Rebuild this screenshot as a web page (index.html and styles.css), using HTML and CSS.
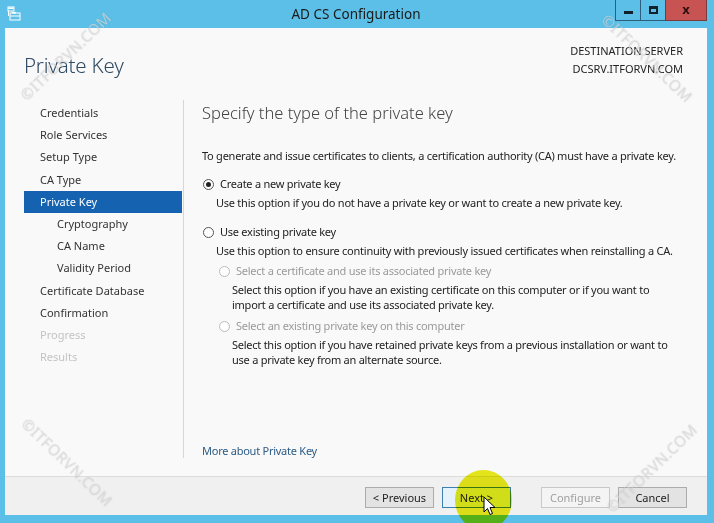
FILE: index.html
```html
<!DOCTYPE html>
<html>
<head>
<meta charset="utf-8">
<link rel="stylesheet" href="styles.css">
</head>
<body>
<div class="window">
  <div class="titlebar">
    <svg class="app-icon" width="14" height="16" viewBox="0 0 14 16">
      <rect x="1" y="1" width="6" height="4" fill="none" stroke="#ffffff" stroke-width="1"/>
      <rect x="1.5" y="1.5" width="5" height="1.5" fill="#ffffff"/>
      <rect x="3" y="7" width="10" height="7" fill="none" stroke="#ffffff" stroke-width="1"/>
      <rect x="5" y="6" width="4" height="1.5" fill="#ffffff"/>
      <line x1="3" y1="10" x2="13" y2="10" stroke="#ffffff" stroke-width="1"/>
      <line x1="1.5" y1="5" x2="1.5" y2="10" stroke="#ffffff" stroke-width="1"/>
    </svg>
    <div class="title">AD CS Configuration</div>
    <div class="controls">
      <div class="ctl ctl-min"><span class="min-glyph"></span></div>
      <div class="ctl ctl-max"><span class="max-glyph"></span></div>
      <div class="ctl ctl-close">x</div>
    </div>
  </div>
  <div class="client">
    <div class="header">
      <h1 class="page-title">Private Key</h1>
      <div class="dest">
        <div>DESTINATION SERVER</div>
        <div>DCSRV.ITFORVN.COM</div>
      </div>
    </div>
    <div class="main">
      <nav class="steps">
        <div class="step">Credentials</div>
        <div class="step">Role Services</div>
        <div class="step">Setup Type</div>
        <div class="step">CA Type</div>
        <div class="step active">Private Key</div>
        <div class="step sub">Cryptography</div>
        <div class="step sub">CA Name</div>
        <div class="step sub">Validity Period</div>
        <div class="step">Certificate Database</div>
        <div class="step">Confirmation</div>
        <div class="step disabled">Progress</div>
        <div class="step disabled">Results</div>
      </nav>
      <section class="content">
        <h2 class="heading">Specify the type of the private key</h2>
        <p class="intro">To generate and issue certificates to clients, a certification authority (CA) must have a private key.</p>
        <div class="option first">
          <div class="radio-row"><span class="radio checked"></span><span>Create a new private key</span></div>
          <div class="desc">Use this option if you do not have a private key or want to create a new private key.</div>
        </div>
        <div class="option second">
          <div class="radio-row"><span class="radio"></span><span>Use existing private key</span></div>
          <div class="desc">Use this option to ensure continuity with previously issued certificates when reinstalling a CA.</div>
          <div class="suboption">
            <div class="radio-row dim"><span class="radio off"></span><span>Select a certificate and use its associated private key</span></div>
            <div class="desc sub-desc">Select this option if you have an existing certificate on this computer or if you want to import a certificate and use its associated private key.</div>
          </div>
          <div class="suboption later">
            <div class="radio-row dim"><span class="radio off"></span><span>Select an existing private key on this computer</span></div>
            <div class="desc sub-desc">Select this option if you have retained private keys from a previous installation or want to use a private key from an alternate source.</div>
          </div>
        </div>
        <a class="more" href="#">More about Private Key</a>
      </section>
    </div>
    <div class="footer">
      <button class="btn">&lt; Previous</button>
      <button class="btn btn-focus">Next &gt;</button>
      <button class="btn btn-disabled gap">Configure</button>
      <button class="btn">Cancel</button>
    </div>
  </div>
  <div class="wm wm-tl">©ITFORVN.COM</div>
  <div class="wm wm-tr">©ITFORVN.COM</div>
  <div class="wm wm-bl">©ITFORVN.COM</div>
  <div class="wm wm-br">©ITFORVN.COM</div>
  <div class="highlight"></div>
  <svg class="cursor" width="13" height="20" viewBox="0 0 13 20">
    <path d="M1 1 L1 16 L4.5 12.5 L7 18.5 L9.5 17.5 L7 11.5 L12 11.5 Z" fill="#ffffff" stroke="#000000" stroke-width="1" stroke-linejoin="round"/>
  </svg>
</div>
</body>
</html>
```

FILE: styles.css
```css
* { box-sizing: border-box; }
html, body { margin: 0; padding: 0; }
body {
  width: 714px;
  height: 523px;
  overflow: hidden;
  font-family: "Noto Sans", "Open Sans", sans-serif;
  font-size: 11px;
  color: #1e1e1e;
}
.window {
  position: relative;
  width: 714px;
  height: 523px;
  background: #5cbfe7;
  display: flex;
  flex-direction: column;
  padding: 0 7px 8px 5px;
  overflow: hidden;
}
.titlebar {
  height: 28px;
  display: flex;
  align-items: flex-start;
  position: relative;
}
.app-icon { margin: 6px 0 0 2px; }
.title {
  position: absolute;
  left: 0; right: 0;
  top: 4px;
  text-align: center;
  font-size: 13.5px;
  color: #1a1a1a;
  line-height: 20px;
}
.controls {
  margin-left: auto;
  display: flex;
  height: 21px;
}
.ctl {
  height: 21px;
  display: flex;
  align-items: center;
  justify-content: center;
  border: 1px solid #2d5f7c;
  border-top: none;
  border-right: none;
}
.ctl-min { width: 25px; }
.ctl-max { width: 25px; }
.ctl-close {
  width: 42px;
  background: #c75352;
  color: #2b1010;
  font-weight: bold;
  font-size: 13px;
  border-color: #7a3a3a;
  border-right: 1px solid #7a3a3a;
  padding-bottom: 3px;
}
.min-glyph {
  width: 9px;
  height: 3px;
  background: #10212c;
  margin-top: 4px;
}
.max-glyph {
  width: 9px;
  height: 8px;
  border: 2px solid #10212c;
  border-top-width: 3px;
}
.client {
  flex: 1;
  background: #f9f9f9;
  display: flex;
  flex-direction: column;
}
.header {
  height: 72px;
  display: flex;
  justify-content: space-between;
  padding: 0 24px 0 19px;
}
.page-title {
  margin: 23px 0 0 0;
  font-size: 20.5px;
  font-weight: 300;
  color: #2f4a63;
  line-height: 28px;
  letter-spacing: -0.2px;
}
.dest {
  margin-top: 14px;
  text-align: right;
  line-height: 18px;
  font-size: 11px;
  color: #222;
}
.main {
  flex: 1;
  display: flex;
  padding: 0 0 18px 19px;
}
.steps {
  width: 158px;
  padding-top: 2px;
}
.step {
  height: 22.2px;
  line-height: 22px;
  padding-left: 16px;
  color: #333;
}
.step.sub { padding-left: 33px; }
.step.active { background: #1563b0; color: #fff; }
.step.disabled { color: #c3c3c3; }
.content {
  flex: 1;
  border-left: 1px solid #d6d6d6;
  margin-left: 1px;
  padding: 0 0 0 18px;
  display: flex;
  flex-direction: column;
  letter-spacing: -0.25px;
}
.heading {
  margin: 1px 0 0 0;
  font-size: 16.5px;
  font-weight: 300;
  color: #444;
  line-height: 24px;
  letter-spacing: 0;
}
.intro {
  margin: 23px 0 0 0;
  line-height: 16px;
  color: #222;
}
.option.first { margin-top: 12px; }
.option.second { margin-top: 14px; }
.radio-row {
  display: flex;
  align-items: center;
  height: 16px;
  line-height: 16px;
  color: #222;
}
.radio-row.dim { color: #9a9a9a; }
.radio {
  width: 11px;
  height: 11px;
  border: 1px solid #555;
  border-radius: 50%;
  margin: 0 6px 0 1px;
  background: #fff;
  display: flex;
  align-items: center;
  justify-content: center;
}
.radio.checked::after {
  content: "";
  width: 5px;
  height: 5px;
  border-radius: 50%;
  background: #222;
}
.radio.off { border-color: #bbb; }
.desc {
  margin: 3px 0 0 14px;
  line-height: 15px;
  color: #222;
}
.suboption { margin: 5px 0 0 16px; }
.suboption.later { margin-top: 6px; }
.sub-desc { margin-left: 14px; padding-right: 31px; }
.more {
  margin-top: auto;
  color: #2c5b85;
  text-decoration: none;
  line-height: 16px;
  margin-bottom: -1px;
}
.footer {
  height: 39px;
  background: #f0f0f0;
  border-top: 1px solid #dcdcdc;
  display: flex;
  justify-content: flex-end;
  align-items: flex-start;
  padding: 10px 20px 0 0;
  gap: 8px;
}
.btn {
  width: 69px;
  height: 21px;
  font-family: inherit;
  font-size: 11px;
  border: 1px solid #acacac;
  background: #e3e3e3;
  color: #222;
  padding: 0;
  line-height: 19px;
}
.btn-focus { background: #e5f1fb; border-color: #3c7fb1; }
.btn-disabled { background: #f4f4f4; border-color: #c8c8c8; color: #a0a0a0; }
.btn.gap { margin-left: 22px; }
.wm {
  position: absolute;
  font-size: 15px;
  color: rgba(255,255,255,0.45);
  text-shadow: 0 0 1px rgba(130,130,130,0.5);
  white-space: nowrap;
  letter-spacing: 0.5px;
  pointer-events: none;
}
.wm-tl { left: 6px; top: 46px; transform: rotate(-44deg); }
.wm-tr { left: 588px; top: 48px; transform: rotate(44deg); }
.wm-bl { left: 8px; top: 452px; transform: rotate(44deg); }
.wm-br { left: 592px; top: 458px; transform: rotate(-44deg); }
.highlight {
  position: absolute;
  left: 455px;
  top: 470px;
  width: 57px;
  height: 60px;
  border-radius: 50%;
  background: #eaea1a;
  mix-blend-mode: multiply;
}
.cursor {
  position: absolute;
  left: 483px;
  top: 496px;
}
```
